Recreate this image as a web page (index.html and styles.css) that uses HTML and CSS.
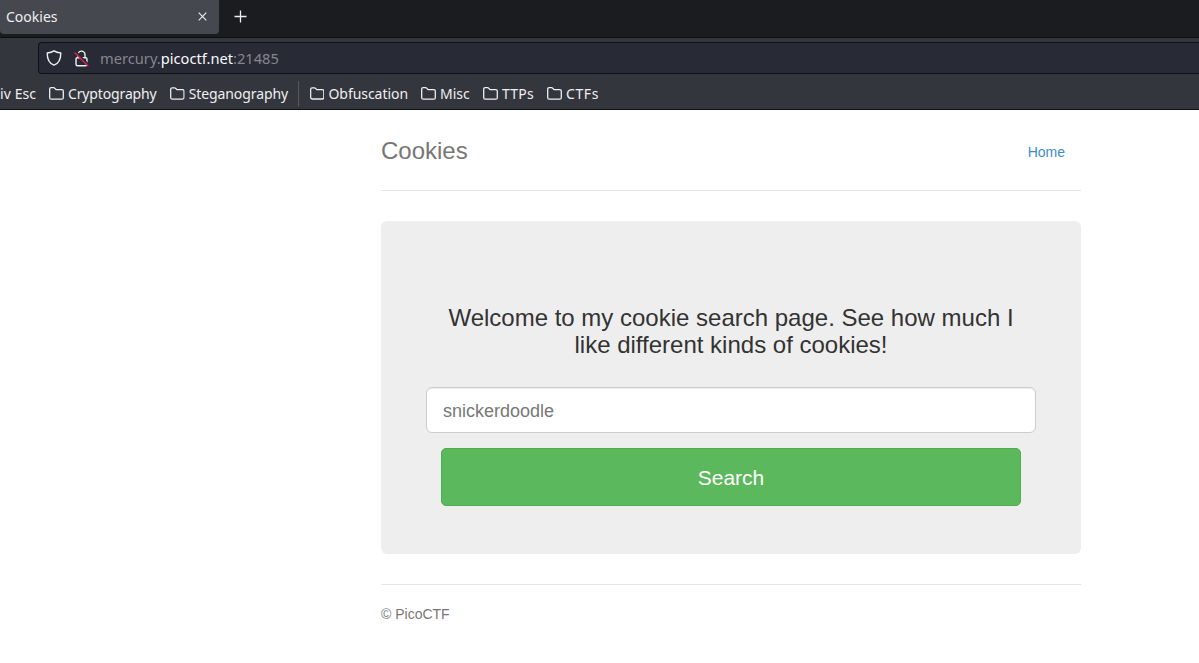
FILE: index.html
```html
<!DOCTYPE html>
<html lang="en">
<head>
<meta charset="utf-8">
<title>Cookies</title>
<link rel="stylesheet" href="styles.css">
</head>
<body>
<svg class="defs" aria-hidden="true">
  <symbol id="folder" viewBox="0 0 15 13">
    <path d="M.7 10.7V2.1Q.7.7 2.1.7h2.6q.5 0 .9.4l1.1 1.1q.4.4.9.4h5.2q1.5 0 1.5 1.5v6.6q0 1.500-1.500 1.500H2.200Q.7 12.200.7 10.700z" fill="none" stroke="currentColor" stroke-width="1.300"/>
  </symbol>
</svg>
<header class="browser">
  <div class="tabs">
    <div class="tab"><span>Cookies</span>
      <svg class="close" viewBox="0 0 9 9"><path d="M.7.7l7.6 7.6M8.3.7L.7 8.3" stroke="currentColor" stroke-width="1.1"/></svg>
    </div>
    <svg class="plus" viewBox="0 0 13 13"><path d="M6.500.5v12M.5 6.500h12" stroke="currentColor" stroke-width="1.300"/></svg>
  </div>
  <div class="toolbar">
    <div class="address">
      <svg class="shield" viewBox="0 0 16 16"><path d="M8 .8C6.200 2 3.800 2.700 1.200 3c0 5.800 1.800 10.400 6.800 12.200 5-1.800 6.800-6.400 6.800-12.200C12.200 2.700 9.800 2 8 .8z" fill="none" stroke="currentColor" stroke-width="1.400" stroke-linejoin="round"/></svg>
      <svg class="lock" viewBox="0 0 15 17"><path d="M4 7V4.600a3.500 3.500 0 0 1 7 0V7M3.200 7.700h8.600q1.100 0 1.100 1.100v5.500q0 1.500-1.500 1.500H3.500Q2 15.800 2 14.300V8.900q0-1.200 1.200-1.200z" fill="none" stroke="currentColor" stroke-width="1.400"/><path d="M1.500 1.500l13.500 13.500" stroke="#282a36" stroke-width="1.800"/><path class="slash" d="M.5 2.500l13.800 13.800"/></svg>
      <span class="url">mercury.<b>picoctf.net</b>:21485</span>
    </div>
  </div>
  <nav class="bookmarks">
    <span class="mark cut"><span>iv Esc</span></span>
    <span class="mark crypto"><svg><use href="#folder"/></svg><span>Cryptography</span></span>
    <span class="mark stegano"><svg><use href="#folder"/></svg><span>Steganography</span></span>
    <i class="divider"></i>
    <span class="mark obf"><svg><use href="#folder"/></svg><span>Obfuscation</span></span>
    <span class="mark misc"><svg><use href="#folder"/></svg><span>Misc</span></span>
    <span class="mark ttps"><svg><use href="#folder"/></svg><span>TTPs</span></span>
    <span class="mark ctfs"><svg><use href="#folder"/></svg><span>CTFs</span></span>
  </nav>
</header>
<main class="container">
  <div class="header">
    <h3 class="brand">Cookies</h3>
    <a class="home">Home</a>
  </div>
  <section class="jumbotron">
    <h3 class="welcome">Welcome to my cookie search page. See how much I<br>like different kinds of cookies!</h3>
    <div class="field">snickerdoodle</div>
    <div class="button">Search</div>
  </section>
  <footer class="footer">© PicoCTF</footer>
</main>
</body>
</html>
```
FILE: styles.css
```css
* { box-sizing: border-box; }
body { margin: 0; height: 663px; overflow: hidden; background: #fff; font: 14px/20px "Liberation Sans", Arial, sans-serif; color: #333; }
.defs { position: absolute; width: 0; height: 0; }
.browser { height: 110px; overflow: hidden; background: #34363d; border-bottom: 1px solid #101116; color: #efeff1; font: 14.67px/20px "Noto Sans", sans-serif; }
.tabs { height: 38px; display: flex; background: #1b1c20; border-bottom: 1px solid #0d0e12; }
.tab { width: 219px; height: 34px; display: flex; align-items: center; justify-content: space-between; padding: 0 12px 0 6px; background: #45484e; border-radius: 0 0 4px 4px; font-size: 14px; }
.close { width: 9px; height: 9px; margin-bottom: 2px; }
.plus { width: 13px; height: 13px; margin: 10px 0 0 15px; }
.toolbar { height: 40px; padding: 4px 0 4px 38px; }
.address { height: 32px; display: flex; align-items: center; border: 1px solid #0f1016; border-right: 0; border-radius: 4px 0 0 4px; background: #282a36; padding-left: 7px; }
.shield { width: 16px; height: 16px; margin-right: 12px; }
.lock { width: 15px; height: 17px; margin-right: 11px; }
.slash { stroke: #e0204a; stroke-width: 1.3; }
.url { color: #85868d; white-space: pre; }
.url b { color: #f9f9fa; font-weight: 400; }
.bookmarks { height: 31px; display: flex; align-items: center; white-space: nowrap; font-size: 14px; }
.mark { flex: none; display: flex; align-items: center; gap: 4px; margin-right: 13px; }
.mark span { padding-top: 1px; }
.mark svg { width: 15px; height: 13px; }
.cut { width: 36px; letter-spacing: .1px; }
.crypto { width: 108px; letter-spacing: -.14px; }
.stegano { width: 118px; letter-spacing: -.1px; }
.obf { width: 98px; letter-spacing: -.05px; }
.misc { width: 49px; }
.ttps { width: 51px; letter-spacing: .2px; }
.ctfs { letter-spacing: .6px; }
.divider { width: 1px; height: 25px; margin-right: 11px; margin-left: -3px; background: #56585e; }
.container { width: 700px; margin-left: 381px; }
.header { height: 81px; margin-bottom: 30px; padding: 20px 16px 0 0; display: flex; justify-content: space-between; border-bottom: 1px solid #e5e5e5; }
.brand { margin: 0; font-size: 24px; line-height: 42px; font-weight: 400; color: #777; }
.home { margin-top: 12px; color: #428bca; }
.jumbotron { height: 333px; padding: 83px 45px 48px; border-radius: 6px; background: #eee; text-align: center; }
.welcome { margin: 0 0 29px; font-size: 24px; line-height: 27px; font-weight: 400; white-space: nowrap; }
.field { height: 46px; padding: 0 16px; border: 1px solid #ccc; border-radius: 6px; background: #fff; box-shadow: inset 0 1px 1px rgba(0,0,0,.075); font-size: 18px; line-height: 46px; text-align: left; color: #777; }
.button { height: 58px; margin: 15px 15px 0; border: 1px solid #4cae4c; border-radius: 5px; background: #5cb85c; color: #fff; font-size: 21px; line-height: 57px; }
.footer { margin-top: 30px; padding-top: 19px; border-top: 1px solid #e5e5e5; color: #777; }
```
